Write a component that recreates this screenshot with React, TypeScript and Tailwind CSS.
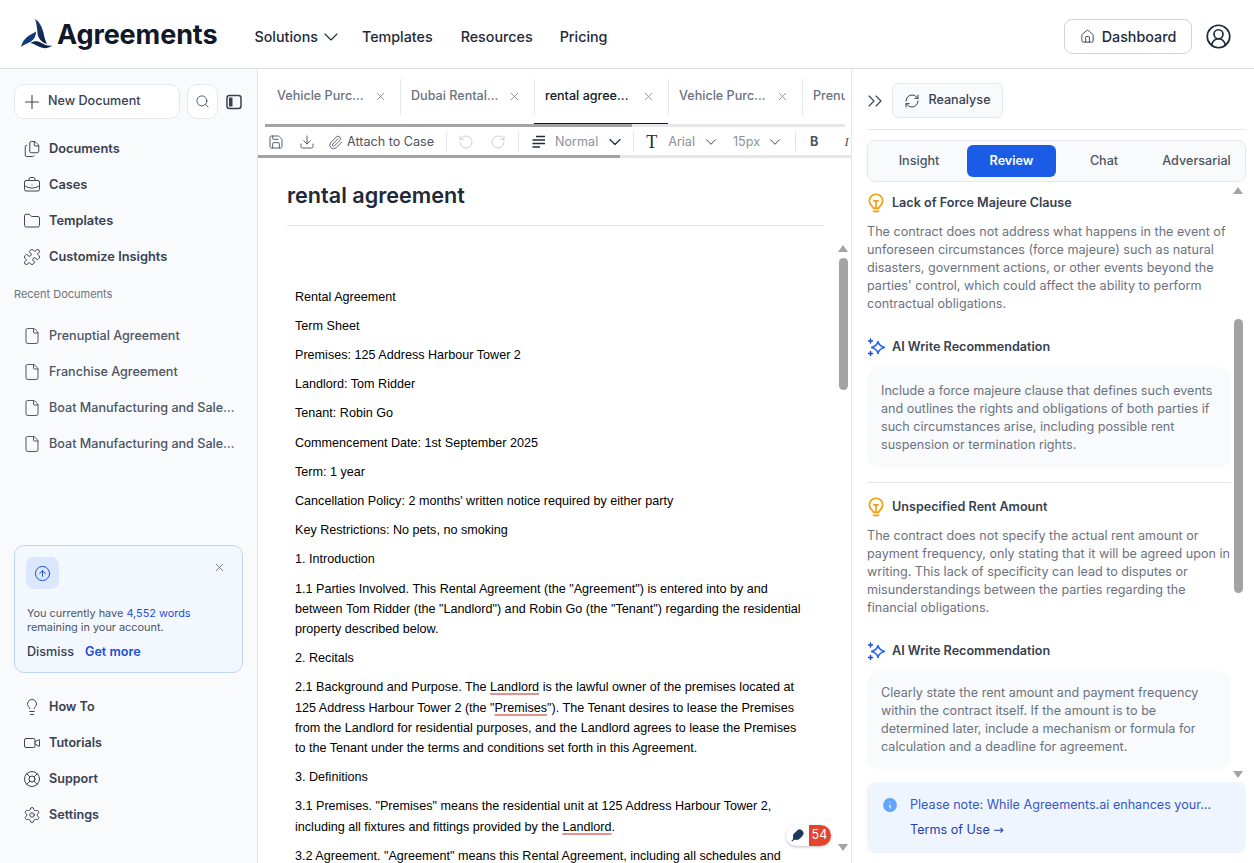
import React from "react";
import {
  ChevronDown, X, Plus, Search, Files, BriefcaseBusiness, Folder, Puzzle, File, Lightbulb, Video, LifeBuoy, Settings,
  CircleArrowUp, Save, Download, Paperclip, House, CircleUserRound, ChevronsRight,
  RefreshCw, Info, Feather, RotateCcw, RotateCw,
} from "lucide-react";

const nav = [
  { icon: Files, label: "Documents" },
  { icon: BriefcaseBusiness, label: "Cases" },
  { icon: Folder, label: "Templates" },
  { icon: Puzzle, label: "Customize Insights" },
];
const recent = ["Prenuptial Agreement", "Franchise Agreement", "Boat Manufacturing and Sale Agreement", "Boat Manufacturing and Sale Agreement"];
const bottom = [
  { icon: Lightbulb, label: "How To" },
  { icon: Video, label: "Tutorials" },
  { icon: LifeBuoy, label: "Support" },
  { icon: Settings, label: "Settings" },
];

function Logo() {
  return (
    <svg width="32" height="32" viewBox="0 0 32 32" className="shrink-0">
      <defs>
        <linearGradient id="lg" x1="0" y1="0" x2="1" y2="1">
          <stop offset="0" stopColor="#1d3f7a" />
          <stop offset="1" stopColor="#0b1b3d" />
        </linearGradient>
      </defs>
      <path d="M14 1 C19 4 21 9 22.500 15 C23.300 19 24 22 26 26 C20 24 17 20 16.500 15 C16 10 15.500 5 14 1 Z" fill="url(#lg)" />
      <path d="M0 29 C1 24 4 20 8 17.500 C10.500 16 13 15 15 13.500 C15 18 13.500 21 10 23.500 C7 25.500 3 26.500 0 29 Z" fill="#123a78" />
      <path d="M9.500 25 C13 22.500 17 23 20.500 25 C24 27 27 28.300 31.500 27.500 C27.500 30.300 23 30.800 19.500 29.300 C16.500 28 13 25.800 9.500 25 Z" fill="#0e2350" />
    </svg>
  );
}

function Sparkle() {
  return (
    <svg width="19" height="19" viewBox="0 0 19 19" fill="none" className="shrink-0">
      <path d="M11 3.500 C11.600 6.800 13 8.300 17.500 9.500 C13 10.700 11.600 12.200 11 15.500 C10.400 12.200 9 10.700 4.500 9.500 C9 8.300 10.400 6.800 11 3.500 Z" stroke="#2563eb" strokeWidth="1.500" strokeLinejoin="round" />
      <path d="M3.500 1 V5 M1.500 3 H5.500 M3.500 13.500 V17.500 M1.500 15.500 H5.500" stroke="#1d4ed8" strokeWidth="1.500" strokeLinecap="round" />
    </svg>
  );
}

function Bulb() {
  return (
    <svg width="20" height="20" viewBox="0 0 24 24" fill="none" stroke="#f59e0b" strokeWidth="2" strokeLinecap="round" strokeLinejoin="round" className="-ml-[1px] shrink-0">
      <path d="M9 18.500 C9 16 4 15 4 9.500 a8 8 0 0 1 16 0 C20 15 15 16 15 18.500 Z" />
      <path d="M9 22h6" />
      <path d="M9.500 9.500h5 M12 9.500V18" />
    </svg>
  );
}

function AlignIcon() {
  return (
    <svg width="16" height="16" viewBox="0 0 16 16" fill="none" stroke="#1f2937" strokeWidth="1.300" className="shrink-0">
      <path d="M5 2.500H14 M1.500 6H14 M1.500 9.500H14 M1.500 13H9" />
    </svg>
  );
}

function SidebarIcon() {
  return (
    <svg width="16" height="16" viewBox="0 0 16 16" fill="none" className="ml-[8px] shrink-0">
      <rect x="1" y="1.500" width="14" height="13" rx="2.500" stroke="#374151" strokeWidth="1.500" />
      <rect x="3" y="3.500" width="3.500" height="9" rx="0.500" fill="#374151" />
    </svg>
  );
}

function Arrow({ dir, className }: { dir: "up" | "down"; className: string }) {
  return (
    <div
      className={`absolute h-0 w-0 border-x-[5px] border-x-transparent ${dir === "up" ? "border-b-[7px] border-b-[#a3a3a3]" : "border-t-[7px] border-t-[#a3a3a3]"} ${className}`}
    />
  );
}

function Tab({ label, active, clip }: { label: string; active?: boolean; clip?: boolean }) {
  return (
    <div className={`flex h-[36px] w-[134px] shrink-0 items-center border-r border-[#e5e7eb] pl-[10px] ${clip ? "border-r-0" : ""}`}>
      <span className={`w-[97px] whitespace-nowrap text-[12.6px] font-medium ${active ? "text-[#111827]" : "text-[#6b7280]"}`}>{label}</span>
      {!clip && <X size={13} strokeWidth={1.3} className="text-[#6b7280]" />}
    </div>
  );
}

function Doc({ children }: { children: React.ReactNode }) {
  return <p className="mb-[9px]">{children}</p>;
}

function Red({ children }: { children: React.ReactNode }) {
  return <span className="underline decoration-[#e88f8f] decoration-[1.5px] underline-offset-2">{children}</span>;
}

function Insight({ title, body, rec, tight }: { title: string; body: string; rec: string; tight?: boolean }) {
  return (
    <div>
      <div className="flex h-[20px] items-center gap-[6px]">
        <Bulb />
        <span className="text-[12.6px] font-semibold text-[#374151]">{title}</span>
      </div>
      <p className="mt-[10px] text-[12.6px] leading-[18px] text-[#6b7280]">{body}</p>
      <div className="mt-[24px] flex h-[20px] items-center gap-[6px]">
        <Sparkle />
        <span className="text-[12.6px] font-semibold text-[#374151]">AI Write Recommendation</span>
      </div>
      <div className={`mt-[10px] rounded-[12px] bg-[#f9fafb] px-[14px] pb-[14px] text-[12.6px] leading-[18px] text-[#6b7280] ${tight ? "pt-[13px]" : "pt-[15px]"}`}>{rec}</div>
    </div>
  );
}

export default function App() {
  return (
    <div className="flex h-[863px] w-[1254px] flex-col overflow-hidden bg-white font-['Inter',sans-serif]">
      <header className="flex h-[69px] shrink-0 items-center border-b border-[#d9dce1] pl-[21px] pr-[22px]">
        <Logo />
        <span className="ml-[4px] text-[27px] font-bold leading-none tracking-[-0.1px] text-[#111827]">Agreements</span>
        <nav className="ml-[37px] mt-[6px] flex items-center text-[14.3px] font-medium text-[#1f2937]">
          <span>Solutions</span>
          <ChevronDown size={24} strokeWidth={1.1} className="ml-[1px]" />
          <span className="ml-[19px]">Templates</span>
          <span className="ml-[28px]">Resources</span>
          <span className="ml-[27px]">Pricing</span>
        </nav>
        <div className="ml-auto mt-[5px] flex items-center gap-[13px]">
          <button className="flex h-[35px] w-[128px] items-center justify-center gap-[7px] rounded-[8px] border border-[#d1d5db] text-[14.3px] font-medium text-[#1f2937]">
            <House size={15} strokeWidth={1.3} />
            Dashboard
          </button>
          <CircleUserRound size={27} strokeWidth={1.5} className="text-[#1f2937]" />
        </div>
      </header>

      <div className="flex min-h-0 flex-1">
        <aside className="flex w-[258px] shrink-0 flex-col border-r border-[#e5e7eb] bg-[#f9fafb] px-[14px] pt-[15px]">
          <div className="flex items-center">
            <button className="flex h-[35px] w-[166px] items-center gap-[5px] rounded-[10px] border border-[#e5e7eb] bg-white pl-[6px] text-[12.6px] font-medium text-[#374151]">
              <Plus size={22} strokeWidth={1.2} />
              New Document
            </button>
            <button className="ml-[7px] flex h-[35px] w-[31px] items-center justify-center rounded-[10px] border border-[#e5e7eb] bg-white text-[#4b5563]">
              <Search size={15} strokeWidth={1.5} />
            </button>
            <SidebarIcon />
          </div>
          <div className="mt-[12px] flex flex-col">
            {nav.map((n) => (
              <div key={n.label} className="flex h-[36px] items-center gap-[8px] pl-[8px] text-[12.8px] font-semibold text-[#374151]">
                <span className="flex w-[19px] shrink-0 justify-center">
                  <n.icon size={18} strokeWidth={1.3} />
                </span>
                {n.label}
              </div>
            ))}
          </div>
          <div className="mt-[11px] h-[16px] text-[11px] leading-[16px] text-[#6b7280]">Recent Documents</div>
          <div className="mt-[16px] flex flex-col">
            {recent.map((r, i) => (
              <div key={i} className="flex h-[36px] items-center gap-[8px] pl-[8px] text-[12.6px] font-medium text-[#4b5563]">
                <span className="flex w-[19px] shrink-0 justify-center">
                  <File size={18} strokeWidth={1.3} />
                </span>
                <span className="w-[187px] truncate">{r}</span>
              </div>
            ))}
          </div>

          <div className="mt-[83px] h-[128px] w-[229px] rounded-[10px] border border-[#bfd3f6] bg-[#f3f7fe] px-[11px] pt-[11px]">
            <div className="flex items-start justify-between">
              <div className="flex h-[32px] w-[33px] items-center justify-center rounded-[8px] bg-[#dbe7fd]">
                <CircleArrowUp size={17} strokeWidth={1.4} className="text-[#1d4ed8]" />
              </div>
              <X size={13} strokeWidth={1.3} className="mr-[5px] mt-[4px] text-[#4b5563]" />
            </div>
            <p className="ml-[1px] mt-[17px] text-[10.9px] leading-[14px] text-[#4b5563]">
              You currently have <span className="text-[#1d4ed8]">4,552 words</span>
              <br />
              remaining in your account.
            </p>
            <div className="ml-[1px] mt-[9px] flex gap-[11px] text-[12.6px] font-medium">
              <span className="text-[#374151]">Dismiss</span>
              <span className="font-semibold text-[#1d4ed8]">Get more</span>
            </div>
          </div>

          <div className="mt-[16px] flex flex-col">
            {bottom.map((n) => (
              <div key={n.label} className="flex h-[36px] items-center gap-[8px] pl-[8px] text-[12.6px] font-semibold text-[#374151]">
                <span className="flex w-[19px] shrink-0 justify-center">
                  <n.icon size={18} strokeWidth={1.3} />
                </span>
                {n.label}
              </div>
            ))}
          </div>
        </aside>

        <main className="relative flex w-[594px] min-w-0 shrink-0 flex-col overflow-hidden border-r border-[#e5e7eb]">
          <div className="relative h-[58px] shrink-0">
            <div className="ml-[9px] flex h-[55px] w-[578px] items-center overflow-hidden">
              <Tab label="Vehicle Purc..." />
              <Tab label="Dubai Rental..." />
              <Tab label="rental agree..." active />
              <Tab label="Vehicle Purc..." />
              <Tab label="Prenuptial" clip />
            </div>
            <div className="absolute bottom-0 left-[7px] h-[3px] w-[580px] bg-[#e5e7eb]" />
            <div className="absolute bottom-0 left-[7px] h-[3px] w-[367px] bg-[#a3a3a3]" />
            <div className="absolute bottom-[3px] left-[276px] h-[1.5px] w-[134px] bg-[#111827]" />
          </div>
          <div className="relative flex h-[31px] shrink-0 items-center overflow-hidden whitespace-nowrap pb-[1px] pl-[10px] text-[12.6px] text-[#4b5563]">
            <Save size={16} strokeWidth={1.4} className="shrink-0" />
            <Download size={16} strokeWidth={1.4} className="ml-[15px] shrink-0" />
            <Paperclip size={15} strokeWidth={1.4} className="ml-[13px] shrink-0" />
            <span className="ml-[4px]">Attach to Case</span>
            <div className="mx-[12px] h-[20px] w-px shrink-0 bg-[#e5e7eb]" />
            <RotateCcw size={16} strokeWidth={1.3} className="-ml-[1px] shrink-0 text-[#c4c7cc]" />
            <RotateCw size={16} strokeWidth={1.3} className="ml-[16px] shrink-0 text-[#c4c7cc]" />
            <div className="mx-[12px] h-[20px] w-px shrink-0 bg-[#e5e7eb]" />
            <AlignIcon />
            <span className="ml-[8px] text-[#8b9099]">Normal</span>
            <ChevronDown size={20} strokeWidth={1.4} className="ml-[7px] shrink-0 text-[#1f2937]" />
            <div className="ml-[8px] h-[20px] w-px shrink-0 bg-[#e5e7eb]" />
            <span className="ml-[12px] font-['Liberation_Serif',serif] text-[18px] font-medium text-[#1f2937]">T</span>
            <span className="ml-[11px] text-[#8b9099]">Arial</span>
            <ChevronDown size={18} strokeWidth={1.3} className="ml-[7px] shrink-0 text-[#374151]" />
            <span className="ml-[13px] text-[#8b9099]">15px</span>
            <ChevronDown size={18} strokeWidth={1.3} className="ml-[6px] shrink-0 text-[#374151]" />
            <div className="ml-[11px] h-[20px] w-px shrink-0 bg-[#e5e7eb]" />
            <span className="ml-[14px] font-bold text-[#4b5563]">B</span>
            <span className="ml-[26px] font-['Liberation_Serif',serif] italic text-[#4b5563]">I</span>
            <div className="absolute bottom-0 left-0 h-[3px] w-full bg-[#e5e7eb]" />
            <div className="absolute bottom-0 left-0 h-[3px] w-[362px] bg-[#a3a3a3]" />
          </div>

          <div className="relative min-h-0 flex-1 overflow-hidden">
            <div className="mx-[29px] mt-[23px] w-[537px] border-b border-[#e5e7eb] pb-[16px]">
              <h1 className="text-[21.6px] font-semibold leading-[28px] text-[#1f2937]">rental agreement</h1>
            </div>
            <div className="ml-[37px] mt-[60.6px] w-[513px] font-['Liberation_Sans',Arial,sans-serif] text-[12.6px] leading-[20.2px] text-black">
              <Doc>Rental Agreement</Doc>
              <Doc>Term Sheet</Doc>
              <Doc>Premises: 125 Address Harbour Tower 2</Doc>
              <Doc>Landlord: Tom Ridder</Doc>
              <Doc>Tenant: Robin Go</Doc>
              <Doc>Commencement Date: 1st September 2025</Doc>
              <Doc>Term: 1 year</Doc>
              <Doc>Cancellation Policy: 2 months' written notice required by either party</Doc>
              <Doc>Key Restrictions: No pets, no smoking</Doc>
              <Doc>1. Introduction</Doc>
              <Doc>1.1 Parties Involved. This Rental Agreement (the "Agreement") is entered into by and between Tom Ridder (the "Landlord") and Robin Go (the "Tenant") regarding the residential property described below.</Doc>
              <Doc>2. Recitals</Doc>
              <Doc>
                2.1 Background and Purpose. The <Red>Landlord</Red> is the lawful owner of the premises located at 125 Address Harbour Tower 2 (the "<Red>Premises</Red>"). The Tenant desires to lease the Premises from the Landlord for residential purposes, and the Landlord agrees to lease the Premises to the Tenant under the terms and conditions set forth in this Agreement.
              </Doc>
              <Doc>3. Definitions</Doc>
              <Doc>
                3.1 Premises. "Premises" means the residential unit at 125 Address Harbour Tower 2, including all fixtures and fittings provided by the <Red>Landlord</Red>.
              </Doc>
              <Doc>3.2 Agreement. "Agreement" means this Rental Agreement, including all schedules and</Doc>
            </div>
            <Arrow dir="up" className="right-[3px] top-[87px]" />
            <div className="absolute right-[3px] top-[100px] h-[132px] w-[9px] rounded-full bg-[#a3a3a3]" />
            <Arrow dir="down" className="right-[3px] top-[686px]" />
            <div className="absolute right-[20px] top-[667px] flex h-[21px] items-center overflow-hidden rounded-full bg-white shadow-[0_1px_3px_rgba(0,0,0,0.25)]">
              <div className="flex h-full w-[23px] items-center justify-center">
                <Feather size={13} strokeWidth={2} fill="#1e3a5f" className="text-[#1e3a5f]" />
              </div>
              <div className="flex h-full w-[22px] items-center justify-center bg-[#e5432d] pr-[1px] text-[12.6px] text-white">54</div>
            </div>
          </div>
        </main>

        <section className="relative flex min-w-0 flex-1 flex-col pl-[15px] pr-[8px]">
          <div className="flex h-[61px] shrink-0 items-center border-b border-[#e5e7eb] pt-[3px]">
            <ChevronsRight size={24} strokeWidth={1.1} className="-ml-[4px] text-[#374151]" />
            <button className="ml-[5px] flex h-[35px] w-[111px] items-center justify-center gap-[8px] rounded-[6px] border border-[#e5e7eb] bg-[#f9fafb] text-[12.6px] font-medium text-[#374151]">
              <RefreshCw size={16} strokeWidth={1.5} />
              Reanalyse
            </button>
          </div>
          <div className="mt-[10px] grid h-[42px] shrink-0 grid-cols-[88px_97px_88px_1fr] items-center rounded-[8px] border border-[#e5e7eb] bg-[#f9fafb] pl-[7px] text-center text-[12.6px] font-medium text-[#4b5563]">
            <span>Insight</span>
            <span className="mx-[4px] flex h-[32px] items-center justify-center rounded-[6px] bg-[#1a5ce6] font-semibold text-white">Review</span>
            <span>Chat</span>
            <span>Adversarial</span>
          </div>
          <div className="h-[587px] min-h-0 w-[364px] shrink-0 overflow-hidden pt-[11px]">
            <Insight
              title="Lack of Force Majeure Clause"
              body="The contract does not address what happens in the event of unforeseen circumstances (force majeure) such as natural disasters, government actions, or other events beyond the parties' control, which could affect the ability to perform contractual obligations."
              rec="Include a force majeure clause that defines such events and outlines the rights and obligations of both parties if such circumstances arise, including possible rent suspension or termination rights."
            />
            <div className="mb-[14px] mt-[14px] h-px bg-[#e5e7eb]" />
            <Insight
              tight
              title="Unspecified Rent Amount"
              body="The contract does not specify the actual rent amount or payment frequency, only stating that it will be agreed upon in writing. This lack of specificity can lead to disputes or misunderstandings between the parties regarding the financial obligations."
              rec="Clearly state the rent amount and payment frequency within the contract itself. If the amount is to be determined later, include a mechanism or formula for calculation and a deadline for agreement."
            />
          </div>
          <div className="mt-[13px] flex h-[71px] shrink-0 gap-[11px] rounded-[8px] bg-[#eff5fe] pl-[14px] pt-[14px] text-[12.6px] text-[#3457c9]">
            <Info size={18} fill="#60a5fa" stroke="#eff5fe" strokeWidth={1.6} className="shrink-0" />
            <div>
              <div className="leading-[18px]">Please note: While Agreements.ai enhances your...</div>
              <div className="mt-[7px] leading-[18px] text-[#1e40af]">
                Terms of Use <span className="font-['DejaVu_Sans',sans-serif]">→</span>
              </div>
            </div>
          </div>
          <Arrow dir="up" className="right-[11px] top-[118px]" />
          <div className="absolute right-[11px] top-[250px] h-[274px] w-[9px] rounded-full bg-[#a3a3a3]" />
          <Arrow dir="down" className="right-[11px] top-[702px]" />
        </section>
      </div>
    </div>
  );
}
